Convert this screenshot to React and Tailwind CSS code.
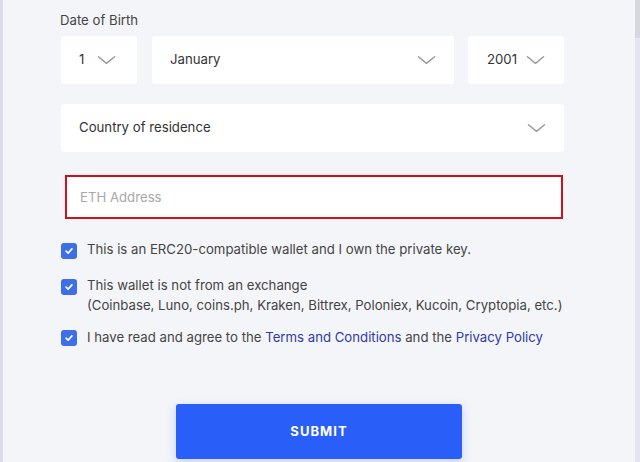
import { useState } from 'react';

const Chevron = ({ className = '' }) => (
  <svg viewBox="0 0 20 10" className={className} fill="none" stroke="currentColor" strokeWidth="1.5" strokeLinecap="round" strokeLinejoin="round">
    <path d="M1.5 1.5 L10 8.5 L18.5 1.5" />
  </svg>
);

const Check = () => (
  <span className="w-[16px] h-[16px] rounded-[3px] bg-[#3e6fe6] flex items-center justify-center shrink-0">
    <svg viewBox="0 0 12 12" className="w-[10px] h-[10px]" fill="none" stroke="white" strokeWidth="2" strokeLinecap="round" strokeLinejoin="round">
      <path d="M2.5 6.2 L5 8.5 L9.5 3.5" />
    </svg>
  </span>
);

export default function App() {
  const [eth, setEth] = useState('');

  return (
    <div className="w-[640px] h-[462px] overflow-hidden bg-[#f4f5f9] flex text-[13.2px]" style={{ fontFamily: 'Inter, "Liberation Sans", sans-serif' }}>
      <div className="w-[3px] bg-[#dadde8] shrink-0" />
      <div className="flex-1 pl-[58px] pt-[11px]">
        <div className="w-[503px] flex flex-col">
          <label className="leading-[18px] text-[#444] -ml-[1px]">Date of Birth</label>

          <div className="flex mt-[7px]">
            <div className="h-[48px] w-[76px] bg-white rounded-[3px] flex items-center pl-[18px] gap-[13px]">
              <span className="text-[#333]">1</span>
              <Chevron className="w-[19px] h-[10px] text-[#9a9a9a]" />
            </div>
            <div className="h-[48px] w-[302px] ml-[15px] bg-white rounded-[3px] flex items-center justify-between pl-[18px] pr-[18px]">
              <span className="text-[#333]">January</span>
              <Chevron className="w-[19px] h-[10px] text-[#9a9a9a]" />
            </div>
            <div className="h-[48px] w-[96px] ml-[14px] bg-white rounded-[3px] flex items-center pl-[19px] gap-[9px]">
              <span className="text-[#333]">2001</span>
              <Chevron className="w-[19px] h-[10px] text-[#9a9a9a]" />
            </div>
          </div>

          <div className="mt-[20px] h-[48px] bg-white rounded-[3px] flex items-center justify-between pl-[18px] pr-[18px]">
            <span className="text-[#333]">Country of residence</span>
            <Chevron className="w-[19px] h-[10px] text-[#9a9a9a]" />
          </div>

          <input
            value={eth}
            onChange={(e) => setEth(e.target.value)}
            placeholder="ETH Address"
            className="mt-[23px] ml-[4px] w-[498px] h-[44px] bg-white border-2 border-[#d0101b] px-[13px] text-[#333] placeholder:text-[#a8a8a8] outline-none"
          />

          <div className="mt-[20px] flex flex-col whitespace-nowrap">
            <div className="flex items-start gap-[10px]">
              <span className="mt-[4px]"><Check /></span>
              <span className="leading-[20px] text-[#444]">This is an ERC20-compatible wallet and I own the private key.</span>
            </div>
            <div className="flex items-start gap-[10px] mt-[16px]">
              <span className="mt-[4px]"><Check /></span>
              <span className="leading-[20px] text-[#444]">
                This wallet is not from an exchange<br />
                (Coinbase, Luno, coins.ph, Kraken, Bittrex, Poloniex, Kucoin, Cryptopia, etc.)
              </span>
            </div>
            <div className="flex items-start gap-[10px] mt-[12px]">
              <span className="mt-[3px]"><Check /></span>
              <span className="leading-[20px] text-[#444]">
                I have read and agree to the <a className="text-[#2f3aa8]">Terms and Conditions</a> and the <a className="text-[#2f3aa8]">Privacy Policy</a>
              </span>
            </div>
          </div>

          <button className="mt-[57px] ml-[115px] w-[286px] h-[55px] rounded-[3px] bg-[#2a5ef8] text-white text-[13px] font-bold tracking-[0.08em] shadow-[0_3px_10px_rgba(42,94,248,0.25)]">
            SUBMIT
          </button>
        </div>
      </div>
      <div className="w-[5px] bg-[#e4e5ee] shrink-0 flex flex-col">
        <div className="h-[38px] bg-[#d6d7de]" />
      </div>
    </div>
  );
}
